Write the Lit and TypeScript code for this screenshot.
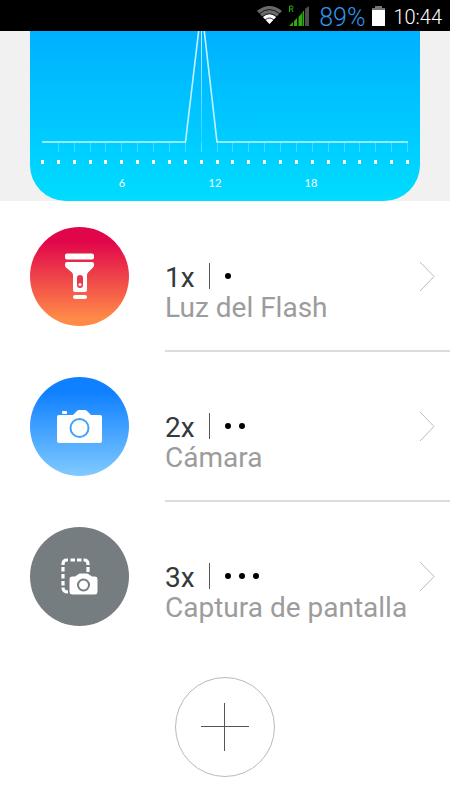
import { LitElement, html, svg, css } from "lit";
import { customElement, property } from "lit/decorators.js";

interface Shortcut {
  presses: number;
  name: string;
  kind: "flash" | "camera" | "capture";
}

const SHORTCUTS: Shortcut[] = [
  { presses: 1, name: "Luz del Flash", kind: "flash" },
  { presses: 2, name: "Cámara", kind: "camera" },
  { presses: 3, name: "Captura de pantalla", kind: "capture" },
];

@customElement("status-bar")
class StatusBar extends LitElement {
  static styles = css`
    :host {
      display: flex;
      align-items: center;
      justify-content: flex-end;
      height: 31px;
      padding-right: 8px;
      background: #000;
      color: #fff;
      font-family: Roboto, sans-serif;
      line-height: 30px;
    }
    svg {
      display: block;
      flex: none;
    }
    .signal {
      margin-left: 6px;
    }
    .level {
      margin: 4px 7px 0 9px;
      font-size: 25px;
      font-weight: 300;
      color: #2f96ec;
    }
    .clock {
      margin: 2px 0 0 8px;
      font-size: 20px;
      font-weight: 300;
    }
  `;

  render() {
    return html`
      <svg width="25" height="20" viewBox="0 0 25 20" role="img" aria-label="Wi-Fi">
        <path d="M0 5Q12.500-5 25 5L12.500 18Z" fill="#6a6a6a" />
        <path d="M6 11Q12.500 5 19 11L12.500 18Z" fill="#fff" />
        <path d="M2 8Q12.500-1 23 8M5 11Q12.500 4.500 20 11M8 14Q12.500 10 17 14" fill="none" stroke="#000" stroke-width="0.800" />
      </svg>
      <svg class="signal" width="22" height="22" viewBox="0 0 22 22" role="img" aria-label="Señal móvil">
        <path d="M1.500 7V1H4Q5 1 5 2.500T4 4H1.500M3.500 4L5 7" fill="none" stroke="#2faa0c" stroke-width="1" />
        <path d="M1 21L5 17V21ZM6 21V16L9 13V21ZM10.500 21V12L14 8V21ZM14.500 21V7L16 5.500V21Z" fill="#2faa0c" />
        <path d="M17 21V4L21 1V21Z" fill="#4b514b" />
      </svg>
      <span class="level">89%</span>
      <svg width="13" height="20" viewBox="0 0 13 20" role="img" aria-label="Batería">
        <path d="M3 0H10V2H13V4H0V2H3Z" fill="#747474" />
        <path d="M0 4H13V20H0Z" fill="#fff" />
      </svg>
      <span class="clock">10:44</span>
    `;
  }
}

@customElement("usage-chart")
class UsageChart extends LitElement {
  static styles = css`
    :host {
      display: block;
      padding: 0 30px;
      background: #f1f1f1;
    }
    svg {
      display: block;
      width: 100%;
      border-radius: 0 0 36px 36px;
      background: linear-gradient(#00b0ff, #00dcff);
    }
    text {
      fill: #fff;
      font-family: Lato, sans-serif;
      font-size: 11px;
      text-anchor: middle;
    }
  `;

  render() {
    const hours = Array.from({ length: 24 }, (_, i) => Math.round(12 + (i * 365) / 23));
    return html`
      <svg viewBox="0 0 390 170" role="img" aria-label="Uso por hora">
        <defs>
          <linearGradient id="fade" x1="0" y1="0" x2="0" y2="1">
            <stop offset="0" stop-color="#fff" stop-opacity="0.8" />
            <stop offset="1" stop-color="#fff" stop-opacity="0.1" />
          </linearGradient>
        </defs>
        <rect x="171" y="0" width="1" height="121" fill="url(#fade)" />
        ${hours.slice(1).map((x) => svg`<rect x=${x} y="112" width="1" height="9" fill="#fff" fill-opacity="0.25"/>`)}
        ${hours.map((x) => svg`<rect x=${x - 1} y="129" width="3" height="4" fill="#fff"/>`)}
        <path d="M12 111H155.500L171.500-24L187 111H378" fill="none" stroke="#c3f3ff" stroke-width="1.600" />
        <text x="92" y="156">6</text>
        <text x="185" y="156">12</text>
        <text x="281" y="156">18</text>
      </svg>
    `;
  }
}

@customElement("shortcut-row")
class ShortcutRow extends LitElement {
  @property({ attribute: false }) shortcut!: Shortcut;

  static styles = css`
    :host {
      display: block;
    }
    .row {
      display: flex;
      width: 100%;
      height: 150px;
      padding: 0 0 0 30px;
      border: 0;
      background: none;
      font-family: Roboto, sans-serif;
      font-size: 28px;
      line-height: 30px;
      text-align: left;
      cursor: pointer;
    }
    svg {
      display: block;
      flex: none;
    }
    .disc {
      width: 99px;
      height: 99px;
      margin: 26px 36px 0 0;
      border-radius: 50%;
    }
    .flash {
      background: linear-gradient(#e1064a 15%, #ff8a48 92%);
    }
    .camera {
      background: linear-gradient(#0f80ff 15%, #80caff);
    }
    .capture {
      background: #757d80;
    }
    .body {
      display: flex;
      flex: 1;
      box-sizing: border-box;
      height: 151px;
      padding: 0 15px 0 0;
      border-bottom: 2px solid #dcdcdc;
    }
    .last {
      border-color: transparent;
    }
    .text {
      flex: 1;
      padding-top: 62px;
    }
    .top {
      display: flex;
      height: 30px;
      color: #33393c;
    }
    .bar {
      width: 1px;
      height: 26px;
      margin: 0 15px 0 14px;
      background: #555;
    }
    .dots {
      display: flex;
      gap: 8px;
      padding-top: 10px;
    }
    .dot {
      width: 6px;
      height: 6px;
      border-radius: 50%;
      background: #000;
    }
    .name {
      display: block;
      color: #9c9c9c;
      white-space: nowrap;
    }
    .chevron {
      margin-top: 60px;
    }
  `;

  private glyph() {
    switch (this.shortcut.kind) {
      case "flash":
        return svg`
          <rect x="35" y="26.500" width="29" height="6" rx="2" fill="#fff"/>
          <path d="M37 35H62Q64 35 64 37V38Q64 39.500 63 40.500L58 45.500Q57 46.500 57 48V63Q57 65 55 65H45Q43 65 43 63V48Q43 46.500 42 45.500L36 40.500Q35 39.500 35 38V37Q35 35 37 35Z" fill="#fff"/>
          <rect x="47" y="48" width="6" height="13" rx="3" fill="#ec3649"/>
          <circle cx="50" cy="57.500" r="1.500" fill="#fff"/>
          <rect x="43" y="68" width="14" height="4" rx="2" fill="#fff"/>`;
      case "camera":
        return svg`
          <path d="M29 38H43L47 34Q48 33 49 33H55Q56 33 57 34L61 38H70Q72 38 72 40V64Q72 66 70 66H29Q27 66 27 64V40Q27 38 29 38Z" fill="#fff"/>
          <rect x="32" y="34" width="5" height="3" rx="1" fill="#fff"/>
          <circle cx="49.500" cy="51" r="9" fill="none" stroke="#45a0fa" stroke-width="2"/>`;
      default:
        return svg`
          <path d="M33 38V37Q33 33 37 33H38M40.500 33H45M47 33H51.500M53.500 33H54Q58 33 58 37V38M58 40V45M33 40V44.500M33 47V51.500M33 54V58.500M33 60.500Q33 65 38 65" fill="none" stroke="#fff" stroke-width="3.200" stroke-linecap="butt"/>
          <path d="M42 49H45L48 47Q49 46 50 46H57Q58 46 59 47L62 49H65Q68 49 68 52V65Q68 68 65 68H42Q39 68 39 65V52Q39 49 42 49Z" fill="#fff" stroke="#757d80" stroke-width="1"/>
          <circle cx="53.500" cy="58" r="5.500" fill="none" stroke="#757d80" stroke-width="2"/>`;
    }
  }

  render() {
    const { presses, name, kind } = this.shortcut;
    return html`
      <button class="row">
        <svg class="disc ${kind}" viewBox="0 0 99 99" aria-hidden="true">${this.glyph()}</svg>
        <span class="body ${kind === "capture" ? "last" : ""}">
          <span class="text">
            <span class="top">
              <span>${presses}x</span>
              <span class="bar"></span>
              <span class="dots">${Array.from({ length: presses }, () => html`<span class="dot"></span>`)}</span>
            </span>
            <span class="name">${name}</span>
          </span>
          <svg class="chevron" width="16" height="31" viewBox="0 0 16 31" aria-hidden="true">
            <path d="M1 1L15 15.500L1 30" fill="none" stroke="#bcbcbc" stroke-width="1" />
          </svg>
        </span>
      </button>
    `;
  }
}

@customElement("app-root")
class AppRoot extends LitElement {
  static styles = css`
    :host {
      display: block;
      min-height: 100vh;
      background: #fff;
    }
    .add {
      display: block;
      width: 100px;
      height: 100px;
      margin: 26px auto 0;
      padding: 0;
      border: 1px solid #bababa;
      border-radius: 50%;
      background: none;
      cursor: pointer;
    }
    .add svg {
      display: block;
    }
  `;

  render() {
    return html`
      <status-bar></status-bar>
      <usage-chart></usage-chart>
      <main>
        ${SHORTCUTS.map((s) => html`<shortcut-row .shortcut=${s}></shortcut-row>`)}
        <button class="add" aria-label="Añadir">
          <svg width="98" height="98" viewBox="0 0 98 98" aria-hidden="true">
            <path d="M25 48.500H73M48.500 25V73" stroke="#50565a" stroke-width="1" />
          </svg>
        </button>
      </main>
    `;
  }
}
